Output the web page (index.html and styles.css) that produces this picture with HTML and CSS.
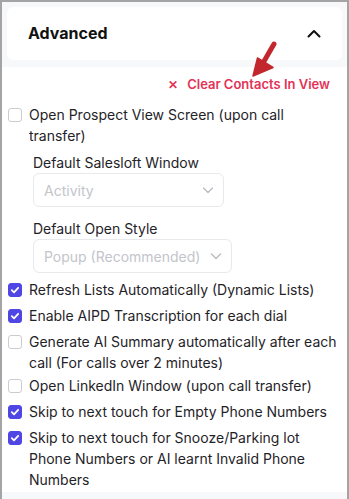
FILE: index.html
```html
<!DOCTYPE html>
<html>
<head>
<meta charset="utf-8">
<link rel="stylesheet" href="styles.css">
</head>
<body>
<div class="frame">
  <div class="header">
    <span class="title">Advanced</span>
    <svg class="chev" width="14" height="9" viewBox="0 0 14 9"><path d="M1.5 7.5 L7 2 L12.5 7.5" fill="none" stroke="#111" stroke-width="2" stroke-linecap="round" stroke-linejoin="round"/></svg>
  </div>
  <div class="content">
    <div class="clear-row">
      <span class="clear"><span class="x">✕</span>Clear Contacts In View</span>
    </div>
    <div class="items">
      <div class="item">
        <span class="cb"></span>
        <span class="label">Open Prospect View Screen (upon call transfer)</span>
      </div>
      <div class="sub">
        <div class="field-label">Default Salesloft Window</div>
        <div class="select s1"><span>Activity</span><svg width="12" height="8" viewBox="0 0 12 8"><path d="M1.5 2 L6 6.5 L10.5 2" fill="none" stroke="#b9bcc2" stroke-width="1.4" stroke-linecap="round" stroke-linejoin="round"/></svg></div>
        <div class="field-label">Default Open Style</div>
        <div class="select s2"><span>Popup (Recommended)</span><svg width="12" height="8" viewBox="0 0 12 8"><path d="M1.5 2 L6 6.5 L10.5 2" fill="none" stroke="#b9bcc2" stroke-width="1.4" stroke-linecap="round" stroke-linejoin="round"/></svg></div>
      </div>
      <div class="item">
        <span class="cb on"></span>
        <span class="label">Refresh Lists Automatically (Dynamic Lists)</span>
      </div>
      <div class="item">
        <span class="cb on"></span>
        <span class="label">Enable AIPD Transcription for each dial</span>
      </div>
      <div class="item">
        <span class="cb"></span>
        <span class="label">Generate AI Summary automatically after each call (For calls over 2 minutes)</span>
      </div>
      <div class="item tight">
        <span class="cb"></span>
        <span class="label">Open LinkedIn Window (upon call transfer)</span>
      </div>
      <div class="item">
        <span class="cb on"></span>
        <span class="label">Skip to next touch for Empty Phone Numbers</span>
      </div>
      <div class="item">
        <span class="cb on"></span>
        <span class="label">Skip to next touch for Snooze/Parking lot Phone Numbers or AI learnt Invalid Phone Numbers</span>
      </div>
    </div>
  </div>
  <svg class="arrow" width="40" height="45" viewBox="0 0 40 45"><path d="M32 3 L21 22" stroke="#c1272d" stroke-width="5" stroke-linecap="round"/><path d="M15.5 17 L31 26.5 L11 35 Z" fill="#c1272d" stroke="#c1272d" stroke-width="1.5" stroke-linejoin="round"/></svg>
</div>
</body>
</html>
```
FILE: styles.css
```css
html, body {
  margin: 0;
  padding: 0;
}
body {
  width: 349px;
  height: 499px;
  overflow: hidden;
  font-family: Inter, "Noto Sans", sans-serif;
  color: #1f2328;
}
.frame {
  position: relative;
  box-sizing: border-box;
  width: 349px;
  height: 499px;
  border: 2px solid #a4a4a4;
  border-bottom: none;
  background: #f7f8fa;
  padding-top: 5px;
  display: flex;
  flex-direction: column;
}
.header {
  margin: 0 5px;
  height: 53px;
  background: #fff;
  border-radius: 6px;
  display: flex;
  align-items: center;
  justify-content: space-between;
  padding: 0 21px 0 21px;
}
.title {
  font-size: 16px;
  font-weight: 700;
  color: #111;
  margin-top: -1px;
}
.content {
  margin-top: 7px;
  background: #fff;
  height: 425px;
  padding: 9px 0 0 6px;
  box-sizing: border-box;
}
.clear-row {
  display: flex;
  justify-content: flex-end;
  padding-right: 17px;
  height: 16px;
  line-height: 16px;
}
.clear {
  color: #e33356;
  font-size: 13px;
  font-weight: 600;
}
.x {
  font-size: 11.5px;
  margin-right: 9px;
  font-weight: 700;
}
.items {
  margin-top: 12px;
  display: flex;
  flex-direction: column;
  gap: 5px;
}
.item {
  display: flex;
  align-items: flex-start;
  gap: 7px;
  padding-right: 10px;
}
.item.tight {
  margin-top: -3px;
}
.label {
  font-size: 14px;
  line-height: 21px;
  color: #1f2328;
}
.cb {
  flex: none;
  box-sizing: border-box;
  width: 14px;
  height: 14px;
  margin-top: 3.5px;
  border: 1px solid #c9ccd2;
  border-radius: 3px;
  background: #fff;
}
.cb.on {
  border-color: #4f46e5;
  background: #4f46e5 url("data:image/svg+xml,%3Csvg xmlns='http://www.w3.org/2000/svg' width='14' height='14' viewBox='0 0 14 14'%3E%3Cpath d='M3.8 7.2 L6 9.3 L10.2 4.8' fill='none' stroke='white' stroke-width='1.8' stroke-linecap='round' stroke-linejoin='round'/%3E%3C/svg%3E") center/14px 14px no-repeat;
}
.sub {
  padding-left: 25px;
  display: flex;
  flex-direction: column;
  margin-top: 1px;
}
.field-label {
  font-size: 14px;
  line-height: 21px;
  color: #1f2328;
}
.select {
  box-sizing: border-box;
  height: 34px;
  border: 1px solid #e8e9ec;
  border-radius: 6px;
  margin: 0 0 11px;
  display: flex;
  align-items: center;
  justify-content: space-between;
  padding: 0 9px 0 10px;
  color: #c3c5ca;
  font-size: 14px;
}
.select.s1 { width: 191px; }
.select.s2 { width: 199px; margin-bottom: 1px; }
.arrow {
  position: absolute;
  left: 240px;
  top: 39px;
}
```
